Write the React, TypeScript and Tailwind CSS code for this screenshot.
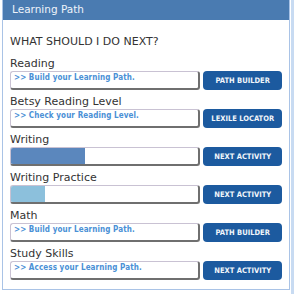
import React from "react";

type Row = {
  label: string;
  button: string;
  text?: string;
  progress?: { width: number; color: string };
};

const rows: Row[] = [
  { label: "Reading", text: ">> Build your Learning Path.", button: "PATH BUILDER" },
  { label: "Betsy Reading Level", text: ">> Check your Reading Level.", button: "LEXILE LOCATOR" },
  { label: "Writing", progress: { width: 74, color: "#5b87bd" }, button: "NEXT ACTIVITY" },
  { label: "Writing Practice", progress: { width: 34, color: "#8cc0dc" }, button: "NEXT ACTIVITY" },
  { label: "Math", text: ">> Build your Learning Path.", button: "PATH BUILDER" },
  { label: "Study Skills", text: ">> Access your Learning Path.", button: "NEXT ACTIVITY" },
];

export default function App() {
  return (
    <div
      className="w-[295px] h-[294px] bg-white flex pl-[2px] overflow-hidden"
      style={{ fontFamily: '"DejaVu Sans", Verdana, sans-serif' }}
    >
      <div className="w-[288px] h-[290px] border border-t-0 border-[#a9c3e6] flex flex-col">
        <div className="h-[20px] bg-[#4a7bb1] text-[#eef3fa] text-[10.5px] pl-[9px] pt-[4px] leading-none">
          Learning Path
        </div>
        <div className="px-[7px] pt-[16px]">
          <div className="text-[11px] text-[#333] leading-none mb-[11px]">WHAT SHOULD I DO NEXT?</div>
          <div className="flex flex-col gap-[6px]">
            {rows.map((r, i) => (
              <div key={i}>
                <div className="text-[11px] text-[#333] leading-none h-[13px]">{r.label}</div>
                <div className="flex gap-[3px] h-[19px]">
                  <div className="w-[194px] h-[19px] rounded-[3px] border border-[#c9c2d3] border-b-[#6f6f6f] border-r-[#6f6f6f] border-b-2 border-r-2 bg-white overflow-hidden flex">
                    {r.progress ? (
                      <div className="h-full" style={{ width: r.progress.width, background: r.progress.color }} />
                    ) : (
                      <div
                        className="text-[8px] font-bold text-[#4a90d6] pl-[3px] pt-[2px] leading-none tracking-[0.1px]"
                        style={{ fontFamily: '"DejaVu Sans Condensed", "DejaVu Sans", sans-serif' }}
                      >
                        {r.text}
                      </div>
                    )}
                  </div>
                  <div
                    className="w-[80px] h-[19px] rounded-[4px] bg-[#1c5a9f] text-[#f2f6fb] text-[7.5px] font-bold flex items-center justify-center leading-none"
                    style={{ fontFamily: '"DejaVu Sans Condensed", "DejaVu Sans", sans-serif' }}
                  >
                    {r.button}
                  </div>
                </div>
              </div>
            ))}
          </div>
        </div>
      </div>
      <div className="ml-[1px] w-[3px] h-[294px] bg-[#c8dbf2]" />
    </div>
  );
}
